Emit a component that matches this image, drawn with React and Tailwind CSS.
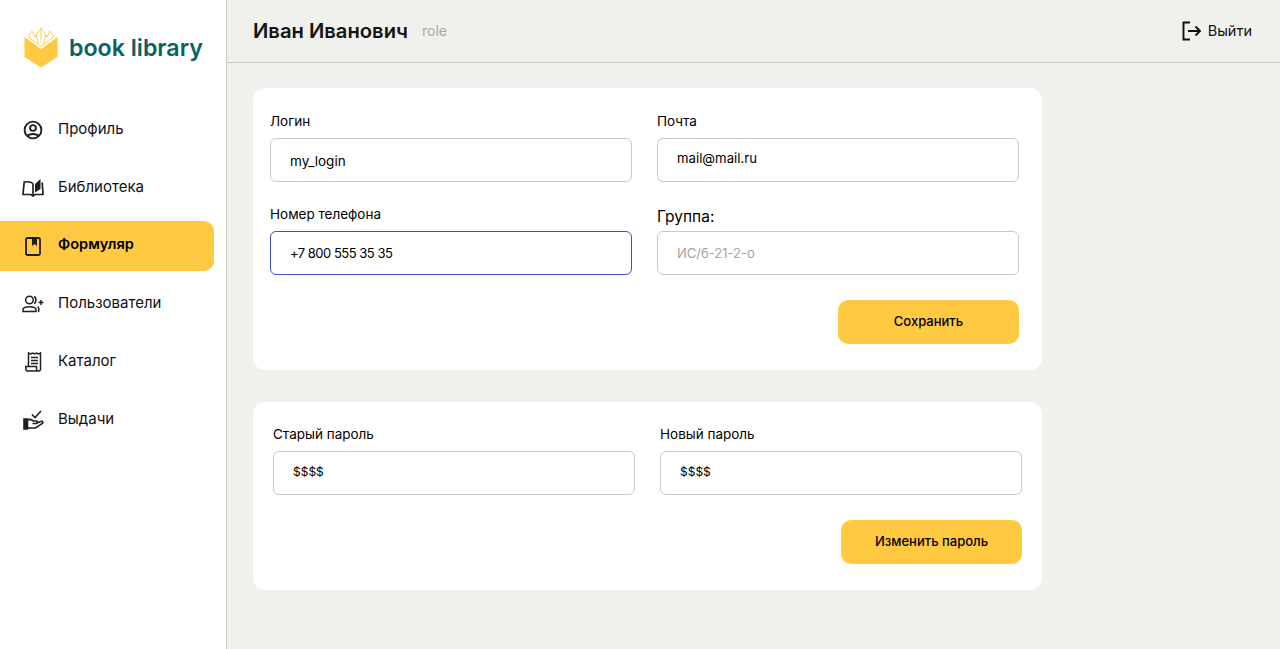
import React from 'react'

const FONT = "font-['Inter','Noto_Sans',sans-serif]"

function Logo() {
  return (
    <svg width="34" height="40" viewBox="0 0 34 40" fill="none">
      <path d="M0.5 9 L17 21 L33.5 9 V29 L17 39.5 L0.5 29 Z" fill="#FFCA42" />
      <path d="M4 9 L8 3 L11 9 L17 0 L23 9 L26 3 L30 9 M17 0 V15 M12 6 L14.5 16 M22 6 L19.5 16 M4 9 L17 18.5 L30 9" stroke="#FFCA42" strokeWidth="0.9" />
    </svg>
  )
}

const ProfileIcon = () => (
  <svg width="20" height="20" viewBox="0 0 20 20" fill="none" stroke="#1f2024" strokeWidth="1.9">
    <circle cx="10" cy="10" r="8.4" />
    <circle cx="10" cy="8" r="2.9" />
    <path d="M4.6 16.2 C5.8 13.2 14.2 13.2 15.4 16.2" />
  </svg>
)

const LibraryIcon = () => (
  <svg width="22" height="18" viewBox="0 0 22 18" fill="none" stroke="#1f2024" strokeWidth="1.7">
    <path d="M11 4.5 C9.5 3 5 2.6 2.2 3 L1 15.5 H9 L11 17 L13 15.5 H21 L20.2 3.5" />
    <path d="M11 4.5 V16" />
    <path d="M13 13.5 V5 L18.5 0 V10 Z" fill="#1f2024" stroke="none" />
  </svg>
)

const CardIcon = () => (
  <svg width="16" height="19" viewBox="0 0 16 19" fill="none">
    <rect x="1" y="1" width="14" height="17" rx="1.5" stroke="#1f2024" strokeWidth="1.8" />
    <path d="M7 1 H12 V9 L9.5 7 L7 9 Z" fill="#1f2024" />
  </svg>
)

const UsersIcon = () => (
  <svg width="22" height="18" viewBox="0 0 22 18" fill="none" stroke="#1f2024" strokeWidth="1.5">
    <circle cx="7.5" cy="5" r="3.8" />
    <path d="M1 16.5 V14.5 C1 10.8 14 10.8 14 14.5 V16.5 Z" />
    <path d="M12 1.5 C14.5 2 14.5 8 12 8.5 M16 11.5 C17 13 17 15 16.5 17" />
    <path d="M19 5 V10 M16.5 7.5 H21.5" />
  </svg>
)

const CatalogIcon = () => (
  <svg width="17" height="20" viewBox="0 0 17 20" fill="none" stroke="#1f2024" strokeWidth="1.5">
    <path d="M3.5 14.5 V1 L5.5 2 L7.5 1 L9.5 2 L11.5 1 L13.5 2 L15.5 1 V17 C15.5 18.3 14.5 19 13.5 19 H2.5 C1.2 19 0.8 17.8 0.8 16 V14.5 H11.5 V17 C11.5 18 12.5 19 13.5 19" />
    <path d="M6 5.5 H13 M6 8.5 H13 M6 11.5 H13" />
  </svg>
)

const IssueIcon = () => (
  <svg width="21" height="20" viewBox="0 0 21 20" fill="none" stroke="#1f2024" strokeWidth="1.6">
    <path d="M9 4.5 L12 7.5 L18 1" />
    <path d="M1 9 H4.5 V19 H1 Z" fill="#1f2024" />
    <path d="M4.5 10 C6.5 8.5 8.5 9.5 10.5 11 H13.5 C15 11 15 13.5 13.5 13.5 H9.5 M13.5 13 L18 11.5 C20 11 20.5 12.8 19 13.7 L12.5 18 H4.5" />
  </svg>
)

const ExitIcon = () => (
  <svg width="20" height="20" viewBox="0 0 20 20" fill="none" stroke="#111" strokeWidth="1.9">
    <path d="M8 1.5 H1.5 V18.5 H8" />
    <path d="M6 10 H18 M13.5 5.5 L18 10 L13.5 14.5" />
  </svg>
)

const NAV = [
  { label: 'Профиль', icon: <ProfileIcon /> },
  { label: 'Библиотека', icon: <LibraryIcon /> },
  { label: 'Формуляр', icon: <CardIcon />, active: true },
  { label: 'Пользователи', icon: <UsersIcon /> },
  { label: 'Каталог', icon: <CatalogIcon /> },
  { label: 'Выдачи', icon: <IssueIcon /> },
]

function Field({ label, value, placeholder, focused, bigLabel, inputClass = 'text-[13.5px]' }) {
  return (
    <div className="flex flex-col w-[362px]">
      <label className={`h-[24px] mb-[5px] text-black ${bigLabel ? 'text-[15.5px] leading-[30px]' : 'text-[13.5px] leading-[24px]'}`}>{label}</label>
      <input
        readOnly
        value={value}
        placeholder={placeholder}
        className={`h-[44px] w-full rounded-[6px] border bg-white pl-[19px] text-black outline-none placeholder:text-[#a3a3a3] ${inputClass} ${focused ? 'border-[#3b4fd1]' : 'border-[#c9c9c9]'}`}
      />
    </div>
  )
}

function SaveButton({ children }) {
  return (
    <button className="h-[44px] w-[181px] rounded-[10px] bg-[#FFCA42] text-[13px] font-medium text-black">
      {children}
    </button>
  )
}

export default function App() {
  return (
    <div className={`flex h-[649px] w-[1280px] overflow-hidden bg-[#F0F0EC] ${FONT}`}>
      <aside className="flex w-[227px] shrink-0 flex-col border-r border-[#c9c9c9] bg-white">
        <div className="flex h-[105px] items-center pl-[24px] pb-[10px] gap-[11px]">
          <Logo />
          <span className="pt-[2px] text-[23.2px] font-semibold leading-none text-[#07645F]">book library</span>
        </div>
        <nav className="flex flex-col gap-[8px] pr-[12px]">
          {NAV.map((item) => (
            <div
              key={item.label}
              className={`flex h-[50px] items-center rounded-r-[10px] ${item.active ? 'bg-[#FFCA42] font-semibold text-black' : 'text-[#111]'}`}
            >
              <span className="flex w-[58px] justify-center pl-[8px]">{item.icon}</span>
              <span className={`pb-[2px] ${item.active ? 'text-[14.6px]' : 'text-[15px]'}`}>{item.label}</span>
            </div>
          ))}
        </nav>
      </aside>

      <div className="flex min-w-0 flex-1 flex-col">
        <header className="flex h-[63px] shrink-0 items-center justify-between border-b border-[#c9c9c9] pl-[26px] pr-[28px]">
          <div className="flex items-center gap-[14px]">
            <span className="text-[20.2px] font-semibold text-[#151515]">Иван Иванович</span>
            <span className="text-[14px] text-[#a8a8a8]">role</span>
          </div>
          <div className="flex items-center gap-[6px] text-[14.5px] text-[#111]">
            <ExitIcon />
            <span>Выйти</span>
          </div>
        </header>

        <main className="flex flex-col gap-[32px] pl-[26px] pt-[25px]">
          <section className="flex h-[282px] w-[789px] flex-col rounded-[12px] bg-white pl-[17px] pr-[23px] pt-[21px]">
            <div className="grid grid-cols-[362px_362px] gap-x-[25px] gap-y-[20px]">
              <Field label="Логин" value="my_login" inputClass="text-[13.5px] pt-[2px]" />
              <Field label="Почта" value="mail@mail.ru" inputClass="text-[13.2px] pb-[4px]" />
              <Field label="Номер телефона" value="+7 800 555 35 35" focused inputClass="text-[13px] tracking-[-0.5px]" />
              <Field label="Группа:" value="" placeholder="ИС/б-21-2-о" bigLabel inputClass="text-[13px]" />
            </div>
            <div className="mt-[25px] flex justify-end">
              <SaveButton>Сохранить</SaveButton>
            </div>
          </section>

          <section className="flex h-[188px] w-[789px] flex-col rounded-[12px] bg-white px-[20px] pt-[20px]">
            <div className="grid grid-cols-[362px_362px] gap-x-[25px]">
              <Field label="Старый пароль" value="$$$$" inputClass="text-[12px] pb-[4px]" />
              <Field label="Новый пароль" value="$$$$" inputClass="text-[12px] pb-[4px]" />
            </div>
            <div className="mt-[25px] flex justify-end">
              <SaveButton>Изменить пароль</SaveButton>
            </div>
          </section>
        </main>
      </div>
    </div>
  )
}
